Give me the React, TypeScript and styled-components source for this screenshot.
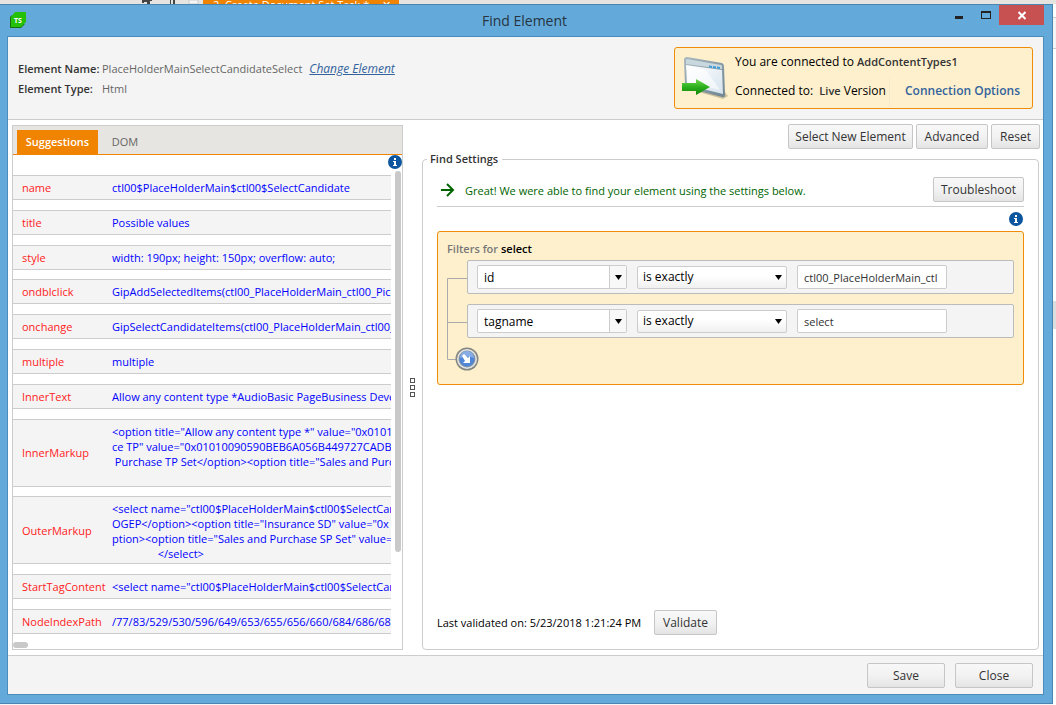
import React from "react";
import styled, { createGlobalStyle } from "styled-components";

const GlobalStyle = createGlobalStyle`
  * { box-sizing: border-box; }
  body {
    margin: 0;
    background: #f6f6f6;
    font-family: "Open Sans", "Noto Sans", sans-serif;
    font-size: 12px;
    line-height: 16px;
    color: #000;
  }
  button, input, select { font: inherit; }
`;

const Desktop = styled.div`
  min-height: 100vh;
  display: flex;
  flex-direction: column;
  background: #f6f6f6;
`;

const Behind = styled.div`
  display: flex;
  height: 4px;
  flex: none;
  padding-left: 142px;
  background: #e6e4e1;
  overflow: hidden;
`;

const BehindMarks = styled.svg`
  width: 61px;
  height: 4px;
`;

const BehindTab = styled.div`
  width: 196px;
  height: 4px;
  background: #f08300;
  color: #fff;
  overflow: hidden;
`;

const BehindTabText = styled.div`
  display: flex;
  justify-content: space-between;
  margin-top: -3px;
  padding: 0 8px 0 10px;
  font-size: 11px;
  line-height: 16px;
`;

const Stage = styled.div`
  flex: 1;
  display: flex;
`;

const BehindEdge = styled.div`
  width: 3px;
  flex: none;
  padding-top: 13px;
  background: #fff;
  &::before {
    content: "";
    display: block;
    height: 30px;
    border: solid #ccc;
    border-width: 1px 0;
    background: #f4f4f4;
  }
  &::after {
    content: "";
    display: block;
    height: 28px;
    margin-top: 252px;
    background: #ddd;
  }
`;

const Dialog = styled.div`
  flex: 1;
  min-width: 0;
  display: flex;
  flex-direction: column;
  padding: 0 8px 8px 7px;
  margin-bottom: 1px;
  background: #63aadb;
  border: 1px solid #4a86b0;
  border-left: 0;
`;

const TitleBar = styled.header`
  height: 31px;
  flex: none;
  display: flex;
  align-items: flex-start;
`;

const Logo = styled.svg`
  width: 16px;
  height: 16px;
  margin: 7px 0 0 3px;
`;

const Title = styled.h1`
  flex: 1;
  margin: 0 0 0 78px;
  text-align: center;
  font-size: 14px;
  font-weight: 400;
  line-height: 31px;
  color: #263440;
`;

const WindowButton = styled.button<{ $close?: boolean }>`
  width: ${(p) => (p.$close ? 45 : 27)}px;
  height: 20px;
  padding: 0;
  border: 0;
  background: ${(p) => (p.$close ? "#c75050" : "transparent")};
  svg { display: block; margin: 0 auto; }
`;

const Content = styled.main`
  flex: 1;
  display: flex;
  flex-direction: column;
  border: 1px solid #4a8cbc;
  background: #fff;
`;

const Header = styled.section`
  display: flex;
  justify-content: space-between;
  align-items: flex-start;
  height: 83px;
  padding: 10px 10px 0 10px;
  background: #f4f4f4;
  border-bottom: 1px solid #ccc;
`;

const Details = styled.dl`
  display: grid;
  grid-template-columns: 84px auto;
  row-gap: 4px;
  margin: 14px 0 0;
  font-size: 11px;
  color: #666;
  dt { font-weight: 600; color: #333; }
  dd { margin: 0; }
`;

const ChangeLink = styled.a`
  margin-left: 7px;
  font-size: 12px;
  font-style: italic;
  color: #33639c;
`;

const Connection = styled.div`
  display: flex;
  width: 359px;
  height: 62px;
  padding-left: 7px;
  border: 1px solid #f08c0a;
  border-radius: 3px;
  background: #fef0cd;
`;

const ConnectionIcon = styled.svg`
  width: 46px;
  height: 44px;
  margin: 9px 7px 0 0;
  flex: none;
`;

const ConnectionText = styled.div`
  flex: 1;
  p { margin: 6px 0 0; }
  b { font-size: 11px; font-weight: 600; color: #333; }
`;

const ConnectionRow = styled.div`
  display: flex;
  margin-top: 8px;
  span { width: 154px; padding-top: 5px; white-space: pre; }
  a {
    height: 29px;
    padding: 5px 0 0 15px;
    border-left: 1px solid #f3ead2;
    font-weight: 600;
    color: #33639c;
    text-decoration: none;
  }
`;

const Body = styled.div`
  flex: 1;
  display: flex;
  padding: 5px 3px 5px 4px;
`;

const Panel = styled.section`
  width: 391px;
  flex: none;
  display: flex;
  flex-direction: column;
  border: 1px solid #ccc;
`;

const Tabs = styled.div`
  display: flex;
  align-items: flex-end;
  height: 29px;
  flex: none;
  padding-left: 4px;
  background: #e6e5e1;
  border-bottom: 1px solid #f08300;
`;

const Tab = styled.button<{ $active?: boolean }>`
  width: ${(p) => (p.$active ? 81 : 54)}px;
  height: 24px;
  padding: 0;
  border: 0;
  font-size: 11px;
  font-weight: ${(p) => (p.$active ? 600 : 400)};
  background: ${(p) => (p.$active ? "#f08300" : "transparent")};
  color: ${(p) => (p.$active ? "#fff" : "#666")};
`;

const PanelBody = styled.div`
  flex: 1;
  display: flex;
  padding-bottom: 15px;
`;

const Suggestions = styled.table`
  flex: 1;
  min-width: 0;
  display: flex;
  padding-top: 20px;
  font-size: 11px;
  line-height: 15px;
  tbody {
    flex: 1;
    min-width: 0;
    display: flex;
    flex-direction: column;
    justify-content: space-between;
  }
`;

const SuggestionRow = styled.tr<{ $tall?: boolean }>`
  display: grid;
  grid-template-columns: 99px minmax(0, 1fr);
  align-items: ${(p) => (p.$tall ? "start" : "center")};
  height: ${(p) => (p.$tall ? 68 : 25)}px;
  border: solid #ccc;
  border-width: 1px 0;
  background: #f4f4f4;
  th {
    align-self: center;
    padding: 0 0 0 9px;
    text-align: left;
    font-weight: 400;
    color: #f22;
  }
  td {
    padding: ${(p) => (p.$tall ? 4 : 0)}px 0 0;
    overflow: hidden;
    white-space: pre;
    color: #00f;
  }
`;

const Rail = styled.div`
  width: 11px;
  flex: none;
  display: flex;
  flex-direction: column;
  align-items: flex-end;
`;

const InfoIcon = styled.svg`
  width: 14px;
  height: 14px;
  flex: none;
`;

const Thumb = styled.div`
  width: 6px;
  height: 381px;
  margin: 2px 1px 0 0;
  border-radius: 3px;
  background: #c9c9c9;
`;

const HorizontalThumb = styled.div`
  width: 15px;
  height: 6px;
  margin: -7px 0 1px 0;
  border-radius: 3px;
  background: #c9c9c9;
`;

const Splitter = styled.div`
  width: 19px;
  flex: none;
  display: flex;
  flex-direction: column;
  align-items: center;
  justify-content: center;
  gap: 2px;
  i { width: 5px; height: 5px; border: 1px solid #555; }
`;

const Settings = styled.section`
  flex: 1;
  min-width: 0;
  display: flex;
  flex-direction: column;
`;

const Toolbar = styled.div`
  display: flex;
  justify-content: flex-end;
  gap: 3px;
  margin-top: -1px;
`;

const Button = styled.button<{ $width: number }>`
  width: ${(p) => p.$width}px;
  height: 25px;
  padding: 0;
  border: 1px solid #c6c6c6;
  border-radius: 2px;
  background: linear-gradient(#f8f8f8, #f2f2f2 50%, #e4e4e4);
  color: #333;
  white-space: nowrap;
`;

const Fieldset = styled.fieldset`
  flex: 1;
  min-width: 0;
  display: flex;
  flex-direction: column;
  margin: 2px 1px 0 0;
  padding: 10px 14px 14px;
  border: 1px solid #ccc;
  border-radius: 4px;
  legend {
    margin-left: -10px;
    padding: 0 4px 0 3px;
    font-size: 11px;
    font-weight: 600;
    color: #333;
  }
`;

const FieldBody = styled.div`
  flex: 1;
  display: flex;
  flex-direction: column;
  height: 100%;
`;

const Status = styled.div`
  display: flex;
  align-items: flex-start;
  height: 30px;
  padding-left: 4px;
  border-bottom: 1px solid #ccc;
  color: #006400;
  font-size: 11px;
  svg { margin: 6px 10px 0 0; }
  p { flex: 1; margin: 6px 0 0; }
  button { font-size: 12px; }
`;

const InfoLine = styled.div`
  display: flex;
  justify-content: flex-end;
  padding: 5px 1px;
`;

const Filters = styled.section`
  height: 154px;
  padding: 8px 9px;
  border: 1px solid #f08c0a;
  border-radius: 3px;
  background: #fef0cd;
  h2 {
    margin: 0;
    padding-bottom: 2px;
    font-size: 11px;
    font-weight: 600;
    line-height: 18px;
    color: #777;
  }
  b { font-weight: 600; color: #000; }
`;

const Tree = styled.div`
  display: flex;
  > svg { flex: none; }
`;

const FilterRows = styled.div`
  flex: 1;
  min-width: 0;
  display: flex;
  flex-direction: column;
  gap: 10px;
`;

const FilterRow = styled.div`
  display: flex;
  align-items: center;
  gap: 10px;
  height: 34px;
  padding: 0 9px;
  border: 1px solid #bbb;
  border-radius: 2px;
  background: #f4f4f4;
`;

const Combo = styled.div`
  display: flex;
  width: 150px;
  height: 24px;
  border: 1px solid #ccc;
  border-radius: 2px;
  background: #fff;
  overflow: hidden;
  input { flex: 1; min-width: 0; padding: 1px 6px 0; border: 0; background: transparent; }
  button {
    width: 17px;
    padding: 0;
    border: 0;
    border-left: 1px solid #ccc;
    background: #f8f8f8;
  }
  svg { display: block; margin: 0 auto; }
`;

const SelectWrap = styled.div`
  display: grid;
  align-items: center;
  width: 150px;
  > * { grid-area: 1 / 1; }
  svg { justify-self: end; margin-right: 5px; pointer-events: none; }
`;

const Select = styled.select`
  width: 150px;
  height: 23px;
  padding: 0 5px;
  appearance: none;
  border: 1px solid #ccc;
  border-radius: 2px;
  background: linear-gradient(#fff 40%, #f0f0f0);
  color: #000;
`;

const TextInput = styled.input`
  && { font-size: 11px; }
  width: 150px;
  height: 24px;
  padding: 0 6px;
  border: 1px solid #ccc;
  border-radius: 2px;
  background: #fff;
  color: #333;
`;

const AddButton = styled.button`
  width: 24px;
  height: 24px;
  margin: -1px 0 0 -12px;
  padding: 0;
  border: 0;
  background: transparent;
  svg { display: block; }
`;

const Validation = styled.div`
  display: flex;
  align-items: center;
  margin-top: auto;
  font-size: 11px;
  span { width: 217px; }
  button { font-size: 12px; }
`;

const Footer = styled.footer`
  display: flex;
  justify-content: flex-end;
  gap: 10px;
  height: 39px;
  padding: 7px 10px 0;
  background: #f4f4f4;
  border-top: 1px solid #ccc;
`;

const Info = () => (
  <InfoIcon viewBox="0 0 14 14" aria-label="Information" role="img">
    <circle cx="7" cy="7" r="7" fill="#0b569f" />
    <path d="M6 3h2v2H6zM5 6h3v4h1v1H5v-1h1V7H5z" fill="#fff" />
  </InfoIcon>
);

const Caret = () => (
  <svg width="7" height="5" viewBox="0 0 7 5">
    <path d="M0 0h7L3.500 5z" fill="#000" />
  </svg>
);

const rows: { name: string; value: string; tall?: boolean }[] = [
  { name: "name", value: "ctl00$PlaceHolderMain$ctl00$SelectCandidate" },
  { name: "title", value: "Possible values" },
  { name: "style", value: "width: 190px; height: 150px; overflow: auto;" },
  { name: "ondblclick", value: "GipAddSelectedItems(ctl00_PlaceHolderMain_ctl00_Pick" },
  { name: "onchange", value: "GipSelectCandidateItems(ctl00_PlaceHolderMain_ctl00_P" },
  { name: "multiple", value: "multiple" },
  { name: "InnerText", value: "Allow any content type *AudioBasic PageBusiness Devel" },
  {
    name: "InnerMarkup",
    tall: true,
    value:
      '<option title="Allow any content type *" value="0x0101\nce TP" value="0x01010090590BEB6A056B449727CADB82\n Purchase TP Set</option><option title="Sales and Purc',
  },
  {
    name: "OuterMarkup",
    tall: true,
    value:
      '<select name="ctl00$PlaceHolderMain$ctl00$SelectCan\nOGEP</option><option title="Insurance SD" value="0x\nption><option title="Sales and Purchase SP Set" value=\n                </select>',
  },
  { name: "StartTagContent", value: '<select name="ctl00$PlaceHolderMain$ctl00$SelectCan' },
  { name: "NodeIndexPath", value: "/77/83/529/530/596/649/653/655/656/660/684/686/68" },
];

const filters = [
  { field: "id", value: "ctl00_PlaceHolderMain_ctl" },
  { field: "tagname", value: "select" },
];

export default function App() {
  return (
    <Desktop>
      <GlobalStyle />
      <Behind>
        <BehindMarks viewBox="0 0 61 4">
          <path d="M0 0h10v1H8v3H5V2H2v1H0zM28 0h1v4h-1zM31 0h2v4h-2z" fill="#444" />
          <path d="M47 0h9v4h-9z" fill="#f6f6f6" stroke="#ccc" />
        </BehindMarks>
        <BehindTab>
          <BehindTabText>
            <span>2. Create Document Set Task *</span>
            <span>✕</span>
          </BehindTabText>
        </BehindTab>
      </Behind>
      <Stage>
        <Dialog>
          <TitleBar>
            <Logo viewBox="0 0 16 16">
              <path d="M0 5v11h11l4-4H2V3z" fill="#16720f" />
              <path d="M5 0h11v10l-5 5H1V5z" fill="#25c108" />
              <text x="4" y="11" fontSize="7" fontWeight="700" fill="#fff">TS</text>
            </Logo>
            <Title>Find Element</Title>
            <WindowButton aria-label="Minimize">
              <svg width="8" height="20"><path d="M0 11h8v3H0z" fill="#222" /></svg>
            </WindowButton>
            <WindowButton aria-label="Maximize">
              <svg width="10" height="20"><path d="M0 6h10v8H0zM1 8v5h8V8z" fill="#222" fillRule="evenodd" /></svg>
            </WindowButton>
            <WindowButton $close aria-label="Close window">
              <svg width="8" height="20"><path d="M0.500 7l7 7m0-7l-7 7" stroke="#fff" strokeWidth="2" /></svg>
            </WindowButton>
          </TitleBar>
          <Content>
            <Header>
              <Details>
                <dt>Element Name:</dt>
                <dd>
                  PlaceHolderMainSelectCandidateSelect
                  <ChangeLink href="#change">Change Element</ChangeLink>
                </dd>
                <dt>Element Type:</dt>
                <dd>Html</dd>
              </Details>
              <Connection>
                <ConnectionIcon viewBox="0 0 46 44">
                  <defs>
                    <linearGradient id="frame" x1="0" y1="0" x2="1" y2="1">
                      <stop offset="0" stopColor="#a9b8c0" />
                      <stop offset="1" stopColor="#6f8591" />
                    </linearGradient>
                    <linearGradient id="pane" x1="0" y1="0" x2="1" y2="1">
                      <stop offset="0" stopColor="#fff" />
                      <stop offset="1" stopColor="#d5e3ee" />
                    </linearGradient>
                    <linearGradient id="arrow" x1="0" y1="0" x2="0" y2="1">
                      <stop offset="0" stopColor="#6ed64e" />
                      <stop offset="0.500" stopColor="#2cb01d" />
                      <stop offset="1" stopColor="#118508" />
                    </linearGradient>
                  </defs>
                  <path d="M10 33l31 9 5-3-4-5z" fill="#b8ab88" opacity="0.700" />
                  <path d="M5 0l35 6q2 1 2 3l1 29q0 3-3 2L5 31q-2-1-2-3L2 3q0-3 3-3z" fill="url(#frame)" />
                  <path d="M5 2l34 6q1 0 1 2v2L4 7V4q0-2 1-2z" fill="#c9d8df" />
                  <path d="M4 8l36 5 1 24-36-9z" fill="url(#pane)" />
                  <path d="M6 10l18 3 14 20-33-8z" fill="#fff" opacity="0.600" />
                  <path d="M27 8.500l3 .5v2l-3-.5zM31 9l3 .5v2l-3-.5zM35 9.500l3 .5v2l-3-.5z" fill="#3d9bd8" />
                  <path d="M0 26h14v-4l14 8-14 8v-4H0z" fill="url(#arrow)" />
                </ConnectionIcon>
                <ConnectionText>
                  <p>You are connected to <b>AddContentTypes1</b></p>
                  <ConnectionRow>
                    <span>Connected to:  <b>Live</b> Version</span>
                    <a href="#options">Connection Options</a>
                  </ConnectionRow>
                </ConnectionText>
              </Connection>
            </Header>
            <Body>
              <Panel>
                <Tabs role="tablist">
                  <Tab role="tab" aria-selected="true" $active>Suggestions</Tab>
                  <Tab role="tab" aria-selected="false">DOM</Tab>
                </Tabs>
                <PanelBody>
                  <Suggestions>
                    <tbody>
                      {rows.map((r) => (
                        <SuggestionRow key={r.name} $tall={r.tall}>
                          <th scope="row">{r.name}</th>
                          <td>{r.value}</td>
                        </SuggestionRow>
                      ))}
                    </tbody>
                  </Suggestions>
                  <Rail>
                    <Info />
                    <Thumb />
                  </Rail>
                </PanelBody>
                <HorizontalThumb />
              </Panel>
              <Splitter><i /><i /><i /></Splitter>
              <Settings>
                <Toolbar>
                  <Button $width={125}>Select New Element</Button>
                  <Button $width={72}>Advanced</Button>
                  <Button $width={49}>Reset</Button>
                </Toolbar>
                <Fieldset>
                  <legend>Find Settings</legend>
                  <FieldBody>
                    <Status>
                      <svg width="14" height="14" viewBox="0 0 14 14">
                        <path d="M0 7h12M6 1l6 6-6 6" fill="none" stroke="#006400" strokeWidth="2" />
                      </svg>
                      <p>Great! We were able to find your element using the settings below.</p>
                      <Button $width={91}>Troubleshoot</Button>
                    </Status>
                    <InfoLine><Info /></InfoLine>
                    <Filters>
                      <h2>Filters for <b>select</b></h2>
                      <Tree>
                        <svg width="20" height="112" viewBox="0 0 20 112">
                          <path d="M20 18.500H.5v81H12M.5 62.500H20" fill="none" stroke="#aaa" />
                        </svg>
                        <FilterRows>
                          {filters.map((f) => (
                            <FilterRow key={f.field}>
                              <Combo>
                                <input aria-label="Attribute" defaultValue={f.field} />
                                <button aria-label="Show attributes"><Caret /></button>
                              </Combo>
                              <SelectWrap>
                                <Select aria-label="Condition"><option>is exactly</option></Select>
                                <Caret />
                              </SelectWrap>
                              <TextInput aria-label="Value" defaultValue={f.value} />
                            </FilterRow>
                          ))}
                          <AddButton aria-label="Add filter">
                            <svg width="24" height="24" viewBox="0 0 24 24">
                              <circle cx="12" cy="12" r="11.500" fill="#858780" />
                              <circle cx="12" cy="12" r="10" fill="#e3e6e6" />
                              <circle cx="12" cy="12" r="8.500" fill="#8e989f" />
                              <circle cx="12" cy="12" r="7.500" fill="#4f86d8" />
                              <path d="M5 11a7 7 0 0 1 14 0q-7-3-14 0z" fill="#86ade6" />
                              <path d="M7 9l2-2 4 4 2-2v7H8l2-2z" fill="#fff" />
                            </svg>
                          </AddButton>
                        </FilterRows>
                      </Tree>
                    </Filters>
                    <Validation>
                      <span>Last validated on: 5/23/2018 1:21:24 PM</span>
                      <Button $width={63}>Validate</Button>
                    </Validation>
                  </FieldBody>
                </Fieldset>
              </Settings>
            </Body>
            <Footer>
              <Button $width={78}>Save</Button>
              <Button $width={78}>Close</Button>
            </Footer>
          </Content>
        </Dialog>
        <BehindEdge />
      </Stage>
    </Desktop>
  );
}
